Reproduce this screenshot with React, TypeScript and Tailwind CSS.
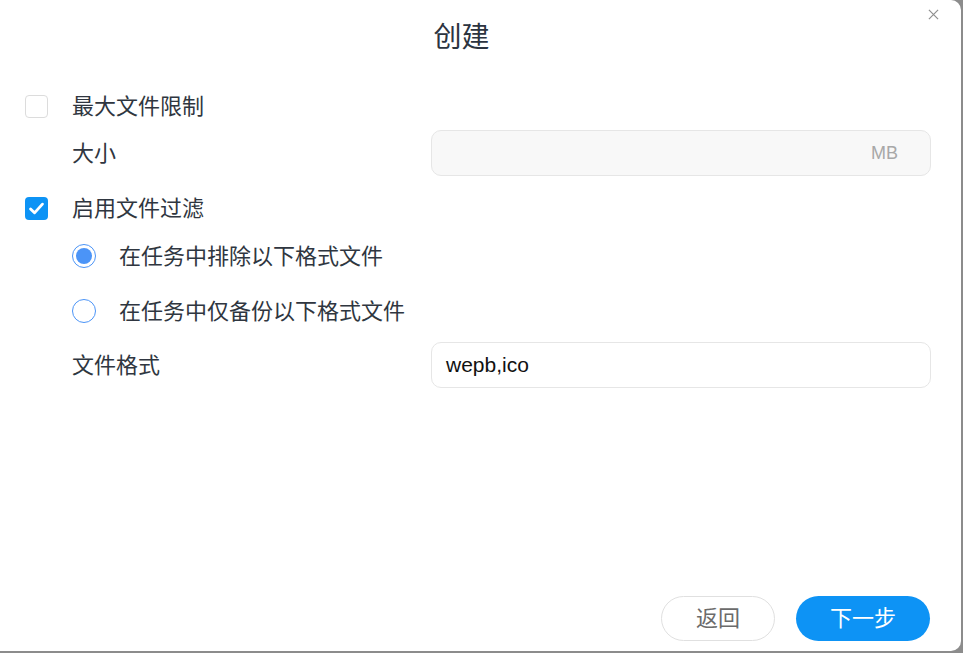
import React from 'react';

const font = { fontFamily: '"Liberation Sans", "Noto Sans CJK SC", sans-serif' };

const CheckBox: React.FC<{ checked?: boolean }> = ({ checked }) =>
  checked ? (
    <span className="flex h-[23px] w-[23px] shrink-0 items-center justify-center rounded-[4px] bg-[#0d93f5]">
      <svg viewBox="0 0 24 24" className="h-[19px] w-[19px]" fill="none" stroke="#fff" strokeWidth={3.6} strokeLinecap="round" strokeLinejoin="round">
        <path d="M4.5 12.5l5 5L19.5 6.5" />
      </svg>
    </span>
  ) : (
    <span className="block h-[23px] w-[23px] shrink-0 rounded-[4px] border border-[#dcdcdc] bg-white" />
  );

const Radio: React.FC<{ checked?: boolean }> = ({ checked }) => (
  <span className="flex h-[24px] w-[24px] shrink-0 items-center justify-center rounded-full border border-[#4b94f7] bg-white">
    {checked && <span className="block h-[16px] w-[16px] rounded-full bg-[#4b94f7]" />}
  </span>
);

export default function App() {
  return (
    <div className="h-[653px] w-[963px] overflow-hidden bg-[#8c8c8c]" style={font}>
      <div className="relative flex h-[651px] w-[961px] flex-col rounded-r-[10px] bg-white text-[22px] text-[#2f3640]">
        <button className="absolute right-[22px] top-[8px] flex h-[12px] w-[12px] items-center justify-center">
          <svg viewBox="0 0 12 12" className="h-[11px] w-[11px]" stroke="#8f8f8f" strokeWidth={1.3}>
            <path d="M1 1l10 10M11 1L1 11" />
          </svg>
        </button>

        <h1 className="pr-[38px] pt-[18px] text-center text-[28px] font-normal leading-[40px] text-[#2c3440]">创建</h1>

        <div className="mt-[33px] flex flex-col pl-[25px] pr-[30px]">
          <div className="flex h-[30px] items-center">
            <CheckBox />
            <span className="ml-[24px]">最大文件限制</span>
          </div>

          <div className="mt-[9px] flex h-[46px] items-center">
            <span className="ml-[47px] flex-1">大小</span>
            <div className="flex h-[46px] w-[500px] items-center justify-end rounded-[10px] border border-[#e6e6e6] bg-[#f8f8f8] pr-[32px] text-[18px] text-[#a8a8a8]">
              MB
            </div>
          </div>

          <div className="mt-[17px] flex h-[30px] items-center">
            <CheckBox checked />
            <span className="ml-[24px]">启用文件过滤</span>
          </div>

          <div className="ml-[47px] mt-[18px] flex h-[30px] items-center">
            <Radio checked />
            <span className="ml-[23px]">在任务中排除以下格式文件</span>
          </div>

          <div className="ml-[47px] mt-[25px] flex h-[30px] items-center">
            <Radio />
            <span className="ml-[23px]">在任务中仅备份以下格式文件</span>
          </div>

          <div className="mt-[16px] flex h-[46px] items-center">
            <span className="ml-[47px] flex-1">文件格式</span>
            <div className="flex h-[46px] w-[500px] items-center rounded-[10px] border border-[#e6e6e6] bg-white pl-[14px] text-[21px] text-[#111]">
              wepb,ico
            </div>
          </div>
        </div>

        <div className="mt-auto flex justify-end gap-[21px] pb-[10px] pr-[31px]">
          <button className="h-[45px] w-[114px] rounded-full border border-[#e0e0e0] bg-white text-[22px] text-[#6b6b6b]">返回</button>
          <button className="h-[45px] w-[134px] rounded-full bg-[#0d93f5] text-[22px] text-white">下一步</button>
        </div>
      </div>
    </div>
  );
}
